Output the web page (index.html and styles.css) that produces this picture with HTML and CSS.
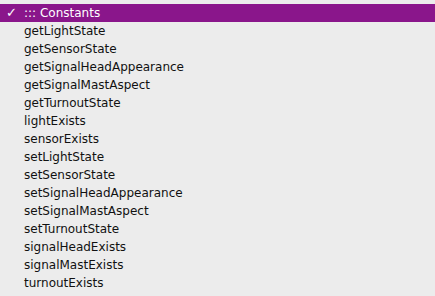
FILE: index.html
```html
<!DOCTYPE html>
<html lang="en">
<head>
    <meta charset="UTF-8">
    <title>Constants menu</title>
    <link rel="stylesheet" href="styles.css">
</head>
<body>
    <ul class="menu">
        <li class="menu-item selected"><span class="check">✓</span>::: Constants</li>
        <li class="menu-item">getLightState</li>
        <li class="menu-item">getSensorState</li>
        <li class="menu-item">getSignalHeadAppearance</li>
        <li class="menu-item">getSignalMastAspect</li>
        <li class="menu-item">getTurnoutState</li>
        <li class="menu-item">lightExists</li>
        <li class="menu-item">sensorExists</li>
        <li class="menu-item">setLightState</li>
        <li class="menu-item">setSensorState</li>
        <li class="menu-item">setSignalHeadAppearance</li>
        <li class="menu-item">setSignalMastAspect</li>
        <li class="menu-item">setTurnoutState</li>
        <li class="menu-item">signalHeadExists</li>
        <li class="menu-item">signalMastExists</li>
        <li class="menu-item">turnoutExists</li>
    </ul>
</body>
</html>
```

FILE: styles.css
```css
* {
    margin: 0;
    padding: 0;
    box-sizing: border-box;
}

body {
    background-color: #ececec;
    font-family: 'DejaVu Sans', sans-serif;
    font-size: 12px;
    color: #111;
    width: 435px;
    height: 296px;
    overflow: hidden;
}

.menu {
    list-style: none;
    padding-top: 4px;
}

.menu-item {
    height: 18px;
    line-height: 18px;
    padding-left: 24px;
    white-space: nowrap;
}

.menu-item.selected {
    background-color: #8a168b;
    color: #fff;
    position: relative;
}

.check {
    position: absolute;
    left: 6px;
    font-size: 13px;
    font-weight: bold;
}
```
